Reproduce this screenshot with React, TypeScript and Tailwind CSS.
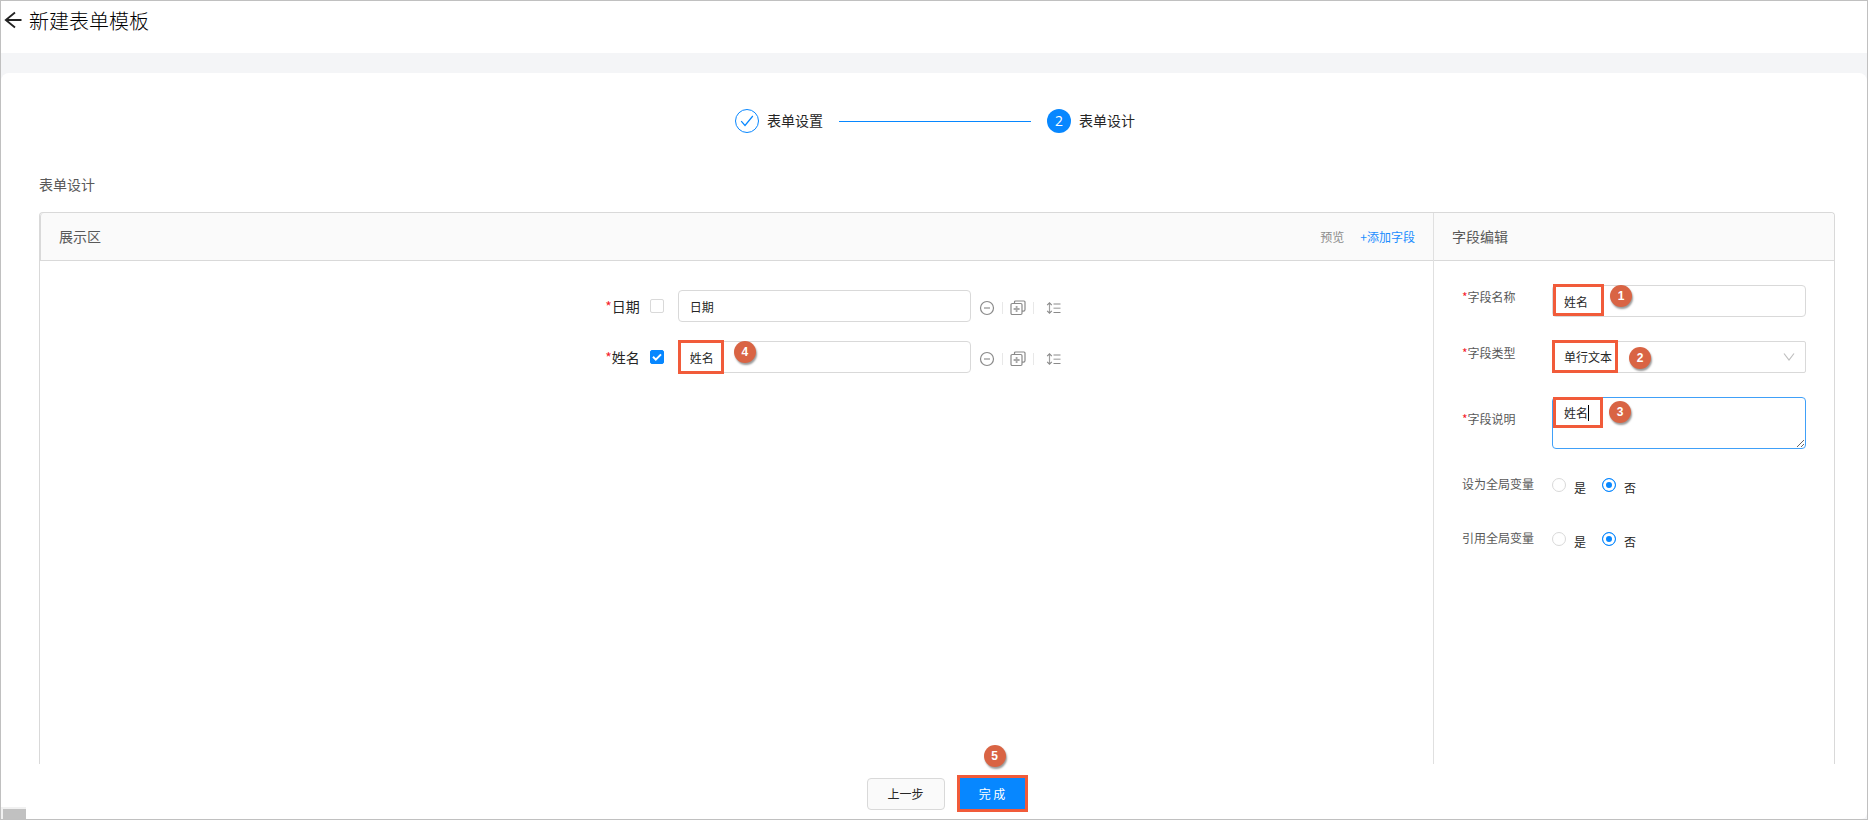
import { useState } from 'react';
import type { ReactNode } from 'react';

type Field = { id: string; label: string; value: string; mark?: string };

const fields: Field[] = [
  { id: 'date', label: '日期', value: '日期' },
  { id: 'name', label: '姓名', value: '姓名', mark: '4' },
];

const globals = [
  { id: 'asGlobal', label: '设为全局变量' },
  { id: 'useGlobal', label: '引用全局变量' },
];

// Round numbered marker of the walkthrough
function Badge({ n, className }: { n: string; className: string }) {
  return (
    <span
      className={`absolute z-10 flex size-[22px] items-center justify-center rounded-full bg-[#d96444] font-['Liberation_Sans'] text-xs font-bold text-white shadow-[1px_2px_2px_rgba(0,0,0,0.4)] ${className}`}
    >
      {n}
    </span>
  );
}

// Red frame round the part to fill in
function Highlight({ className }: { className: string }) {
  return <span className={`pointer-events-none absolute z-10 border-3 border-[#f15b3a] ${className}`} />;
}

function MinusIcon() {
  return (
    <svg className="size-4" viewBox="0 0 16 16" fill="none" stroke="#8a8a8a">
      <circle cx="8" cy="8" r="6.5" strokeWidth="1.2" />
      <path d="M5 8h6" stroke="#a0a0a0" strokeWidth="1.4" />
    </svg>
  );
}

function CopyIcon() {
  return (
    <svg className="size-4" viewBox="0 0 16 16" fill="none" stroke="#8a8a8a" strokeWidth="1.2">
      <rect x="1" y="3.5" width="11" height="11" rx="1.2" />
      <path d="M4.5 3.5V2a1 1 0 0 1 1-1H14a1 1 0 0 1 1 1v7.5a1.6 1.6 0 0 1-1.6 1.6H12" />
      <path d="M3.6 9h6M6.6 6v6" stroke="#a8a8a8" strokeWidth="1.8" />
    </svg>
  );
}

function SortIcon() {
  return (
    <svg className="size-4" viewBox="0 0 16 16" fill="none" stroke="#8a8a8a" strokeWidth="1.2">
      <path d="M3.5 3v10" stroke="#a0a0a0" />
      <path d="M1.2 5.2L3.5 2.8l2.3 2.4M1.2 10.8l2.3 2.4 2.3-2.4" />
      <path d="M7.5 4h7M7.5 12.5h7" />
      <path d="M7.5 8.2h7" stroke="#a8a8a8" />
    </svg>
  );
}

function Required() {
  return <span className="text-[#f5222d]">*</span>;
}

function FieldRow({ field, checked, onToggle }: { field: Field; checked: boolean; onToggle: () => void }) {
  return (
    <div className="flex items-center">
      <div className="flex w-[45%] items-center justify-end pr-[3px]">
        <label htmlFor={field.id} className="text-sm text-[#262626]">
          <Required />
          {field.label}
        </label>
        <span className="relative ml-2.5 flex">
          <input
            type="checkbox"
            aria-label={`选择${field.label}`}
            checked={checked}
            onChange={onToggle}
            className="peer size-3.5 appearance-none rounded-xs border border-[#d9d9d9] bg-white checked:border-[#0787ff] checked:bg-[#0787ff]"
          />
          <svg
            className="pointer-events-none absolute inset-0 hidden size-3.5 peer-checked:block"
            viewBox="0 0 14 14"
            fill="none"
            stroke="white"
            strokeWidth="2"
          >
            <path d="M3 6.8l2.8 2.8L11 4.4" />
          </svg>
        </span>
      </div>
      <div className="relative ml-[11px]">
        <input
          id={field.id}
          type="text"
          defaultValue={field.value}
          className="block h-8 w-[293px] rounded border border-[#d9d9d9] bg-white px-[11px] text-xs text-[#262626] outline-none"
        />
        {field.mark && (
          <>
            <Highlight className="-top-px left-0 h-[34px] w-[46px]" />
            <Badge n={field.mark} className="top-0 left-14" />
          </>
        )}
      </div>
      <div className="ml-2 flex items-center pt-1">
        <button type="button" aria-label="删除">
          <MinusIcon />
        </button>
        <span className="mx-[7px] h-3 w-px bg-[#e8e8e8]" />
        <button type="button" aria-label="复制">
          <CopyIcon />
        </button>
        <span className="mr-3 ml-[7px] h-3 w-px bg-[#e8e8e8]" />
        <button type="button" aria-label="排序">
          <SortIcon />
        </button>
      </div>
    </div>
  );
}

function EditRow({ id, label, tall, children }: { id: string; label: string; tall?: boolean; children: ReactNode }) {
  return (
    <div className="flex items-start">
      <label htmlFor={id} className={`w-[90px] shrink-0 ${tall ? 'leading-[44px]' : 'leading-6'}`}>
        <Required />
        {label}
      </label>
      <div className="relative flex-1">{children}</div>
    </div>
  );
}

function App() {
  const [selected, setSelected] = useState<string>('name');

  return (
    <div className="relative flex min-h-screen flex-col overflow-hidden border border-[#c0c0c0] bg-[#f4f5f7] font-['Noto_Sans_CJK_SC',sans-serif] text-[#262626]">
      <header className="flex h-[52px] items-start bg-white pt-1 pl-0.5">
        <button type="button" aria-label="返回" className="mt-[5px]">
          <svg className="h-5 w-5" viewBox="0 0 20 20" fill="none" stroke="#222" strokeWidth="1.8">
            <path d="M18.500 10H2.500M12 2.500L2.800 10l9.200 7.500" />
          </svg>
        </button>
        <h1 className="ml-1.5 text-xl leading-8 font-light text-black">新建表单模板</h1>
      </header>

      <main className="mt-5 flex flex-1 flex-col rounded-t-lg rounded-b-md bg-white pt-9 pr-8 pl-[38px]">
        {/* Steps */}
        <ol className="flex h-6 items-center justify-center pr-1 text-sm">
          <li className="flex items-center">
            <span className="flex size-6 items-center justify-center rounded-full border border-[#0787ff]">
              <svg className="size-4" viewBox="0 0 16 16" fill="none" stroke="#0787ff" strokeWidth="1.2">
                <path d="M2.200 8.200L6 12.500 13.800 3" />
              </svg>
            </span>
            <span className="ml-2 pb-0.5">表单设置</span>
          </li>
          <li className="flex items-center">
            <span className="mx-4 h-px w-48 bg-[#0787ff]" />
            <span className="flex size-6 items-center justify-center rounded-full bg-[#0787ff] font-['Open_Sans'] text-white">
              2
            </span>
            <span className="ml-2 pb-0.5">表单设计</span>
          </li>
        </ol>

        <h2 className="mt-[39px] text-sm leading-6 text-[#595959]">表单设计</h2>

        <div className="mt-4 flex flex-1 rounded-t border border-b-0 border-[#d9d9d9]">
          {/* Preview area */}
          <section className="flex-1">
            <div className="flex h-12 items-center rounded-tl border-b border-l border-[#d9d9d9] bg-[#fafafa] pr-[18px] pl-[18px] text-[#595959]">
              <h3 className="flex-1 pb-0.5 text-sm">展示区</h3>
              <button type="button" className="text-xs text-[#8c8c8c]">
                预览
              </button>
              <button type="button" className="ml-4 text-xs text-[#1b8dff]">
                +添加字段
              </button>
            </div>
            <div className="flex flex-col gap-[19px] pt-[29px]">
              {fields.map((field) => (
                <FieldRow
                  key={field.id}
                  field={field}
                  checked={selected === field.id}
                  onToggle={() => setSelected(field.id)}
                />
              ))}
            </div>
          </section>

          {/* Field editor */}
          <section className="w-[401px] shrink-0 border-l border-[#e0e0e0]">
            <div className="flex h-12 items-center rounded-tr border-b border-[#d9d9d9] bg-[#fafafa] pl-[18px] text-sm text-[#595959]">
              <h3 className="pb-0.5">字段编辑</h3>
            </div>
            <form className="flex flex-col gap-6 pt-6 pr-7 pl-7 text-xs text-[#595959]">
              <EditRow id="fieldName" label="字段名称">
                <input
                  id="fieldName"
                  type="text"
                  defaultValue="姓名"
                  className="block h-8 w-full rounded border border-[#d9d9d9] px-[11px] text-[#262626] outline-none"
                />
                <Highlight className="-top-px left-px h-8 w-[51px]" />
                <Badge n="1" className="top-0 left-[58px]" />
              </EditRow>
              <EditRow id="fieldType" label="字段类型">
                <select
                  id="fieldType"
                  defaultValue="text"
                  className="block h-8 w-full appearance-none rounded-xs border border-[#d9d9d9] bg-white px-[11px] text-[#262626] outline-none"
                >
                  <option value="text">单行文本</option>
                  <option value="area">多行文本</option>
                </select>
                <svg
                  className="pointer-events-none absolute top-2.5 right-[11px] h-3 w-3"
                  viewBox="0 0 12 12"
                  fill="none"
                  stroke="#bfbfbf"
                  strokeWidth="1.2"
                >
                  <path d="M1 2.500L6 9 11 2.500" />
                </svg>
                <Highlight className="-top-px left-0 h-[33px] w-[66px]" />
                <Badge n="2" className="top-1.5 left-[77px]" />
              </EditRow>
              <EditRow id="fieldNote" label="字段说明" tall>
                <textarea
                  id="fieldNote"
                  defaultValue="姓名"
                  className="block h-[52px] w-full rounded border border-[#40a0f8] px-[11px] pt-1 leading-[22px] text-[#262626] outline-none"
                />
                <span className="absolute top-2 left-9 h-4 w-px bg-black" />
                <Highlight className="top-0 left-px h-[31px] w-[50px]" />
                <Badge n="3" className="top-1 left-[57px]" />
              </EditRow>
              {globals.map((item) => (
                <fieldset key={item.id} aria-label={item.label} className="flex h-[30px] items-start">
                  <span className="w-[90px] shrink-0 leading-[22px]">{item.label}</span>
                  {['是', '否'].map((option) => (
                    <label key={option} className="mr-4 flex items-start leading-[30px] text-[#262626]">
                      <input
                        type="radio"
                        name={item.id}
                        defaultChecked={option === '否'}
                        className="mt-[5px] mr-2 size-3.5 appearance-none rounded-full border border-[#d9d9d9] bg-white shadow-[inset_0_0_0_3px_white] checked:border-[#0787ff] checked:bg-[#0787ff]"
                      />
                      {option}
                    </label>
                  ))}
                </fieldset>
              ))}
            </form>
          </section>
        </div>

        <footer className="flex justify-center gap-3.5 pt-3.5 pb-[9px] pl-[18px] text-xs">
          <button type="button" className="h-8 w-[78px] rounded border border-[#d9d9d9] bg-[#fafafa]">
            上一步
          </button>
          <div className="relative">
            <button type="button" className="h-8 w-[67px] bg-[#0787ff] text-white">
              完 成
            </button>
            <Highlight className="-inset-x-0.5 -top-[3px] -bottom-0.5" />
            <Badge n="5" className="-top-[33px] left-[25px]" />
          </div>
        </footer>
      </main>

      {/* Horizontal scroll thumb */}
      <div className="absolute bottom-0 left-0 h-3 w-[25px] bg-[#f1f1f1] pt-0.5 pl-0.5">
        <div className="h-full bg-[#c1c1c1]" />
      </div>
    </div>
  );
}

export default App;
